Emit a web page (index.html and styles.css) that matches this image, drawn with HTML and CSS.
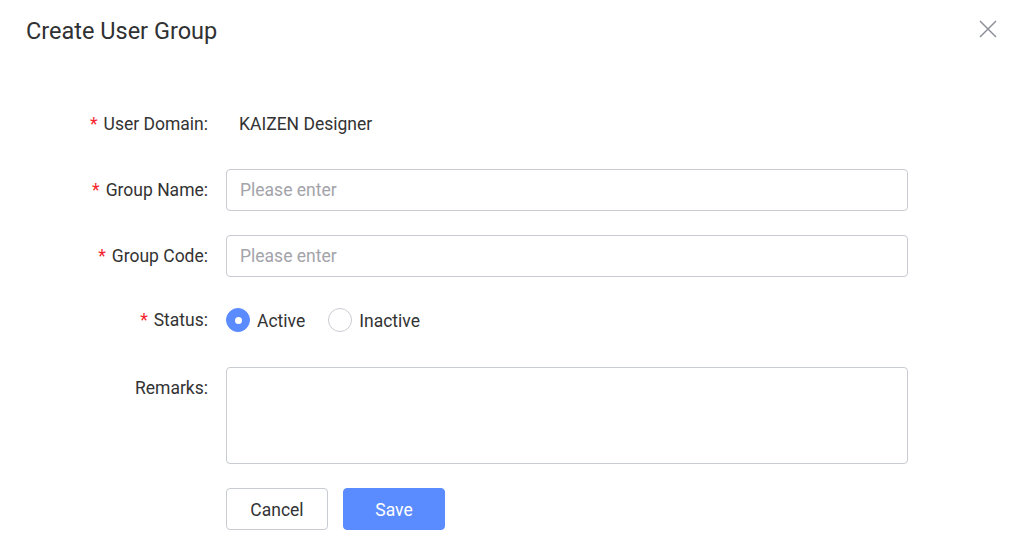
FILE: index.html
```html
<!DOCTYPE html>
<html lang="en">
<head>
<meta charset="utf-8">
<title>Create User Group</title>
<link rel="stylesheet" href="styles.css">
</head>
<body>
<div class="dialog">
  <div class="header">
    <h1 class="title">Create User Group</h1>
    <button class="close" aria-label="Close">
      <svg width="18" height="18" viewBox="0 0 18 18"><path d="M1 1L17 17M17 1L1 17" stroke="#8c9099" stroke-width="1.5" fill="none"/></svg>
    </button>
  </div>
  <form class="form">
    <div class="row row-text">
      <label class="label"><span class="req">*</span>User Domain:</label>
      <div class="value">KAIZEN Designer</div>
    </div>
    <div class="row">
      <label class="label"><span class="req">*</span>Group Name:</label>
      <input class="input" type="text" placeholder="Please enter">
    </div>
    <div class="row">
      <label class="label"><span class="req">*</span>Group Code:</label>
      <input class="input" type="text" placeholder="Please enter">
    </div>
    <div class="row row-status">
      <label class="label"><span class="req">*</span>Status:</label>
      <div class="radios">
        <span class="radio-item"><span class="radio checked"></span>Active</span>
        <span class="radio-item"><span class="radio"></span>Inactive</span>
      </div>
    </div>
    <div class="row row-remarks">
      <label class="label label-top">Remarks:</label>
      <textarea class="textarea"></textarea>
    </div>
    <div class="row row-actions">
      <span></span>
      <div class="actions">
        <button type="button" class="btn btn-default">Cancel</button>
        <button type="button" class="btn btn-primary">Save</button>
      </div>
    </div>
  </form>
</div>
</body>
</html>
```
FILE: styles.css
```css
* { box-sizing: border-box; }
html, body { margin: 0; padding: 0; background: #fff; }
body {
  font-family: Roboto, "Liberation Sans", Arial, sans-serif;
  color: #333;
  width: 1014px;
  height: 554px;
  overflow: hidden;
}
.dialog { width: 1014px; }
.header {
  display: flex;
  justify-content: space-between;
  align-items: flex-start;
  padding: 16px 17px 0 26px;
  height: 103px;
}
.title {
  margin: 0;
  font-size: 23.5px;
  font-weight: 400;
  line-height: 30px;
  color: #303133;
}
.close {
  margin-top: 4px;
  padding: 0;
  border: 0;
  background: none;
  width: 18px;
  height: 18px;
  display: flex;
}
.form { display: flex; flex-direction: column; }
.row {
  display: grid;
  grid-template-columns: 208px 682px;
  column-gap: 18px;
  align-items: center;
  margin-bottom: 24px;
  font-size: 17.5px;
}
.row-text { height: 42px; }
.row-status { height: 36px; margin-bottom: 30px; }
.row-remarks { align-items: start; }
.label {
  text-align: right;
  white-space: nowrap;
  line-height: 42px;
  color: #333;
}
.row-text .label { line-height: 41px; }
.row-status .label { line-height: 38px; }
.req {
  color: #f5222d;
  margin-right: 6px;
}
.value { padding-left: 13px; color: #333; line-height: 38px; }
.input {
  height: 42px;
  width: 682px;
  border: 1px solid #c9cbd3;
  border-radius: 4px;
  padding: 0 13px 1px;
  font: inherit;
  font-size: 17.5px;
  color: #333;
  outline: none;
}
.input::placeholder { color: #a3a3aa; }
.textarea {
  height: 97px;
  width: 682px;
  border: 1px solid #c9cbd3;
  border-radius: 4px;
  resize: none;
  font: inherit;
  outline: none;
  display: block;
}
.radios { display: flex; align-items: center; gap: 23px; }
.radio-item { display: inline-flex; align-items: center; gap: 7px; color: #333; padding-top: 2px; }
.radio {
  width: 24px;
  height: 24px;
  border-radius: 50%;
  border: 1px solid #c9cbd3;
  background: #fff;
  display: inline-block;
  position: relative;
  margin-top: -2px;
}
.radio.checked {
  border-color: #5b8cff;
  background: #5b8cff;
}
.radio.checked::after {
  content: "";
  position: absolute;
  left: 50%;
  top: 50%;
  width: 7px;
  height: 7px;
  margin: -3.5px 0 0 -3.5px;
  border-radius: 50%;
  background: #fff;
}
.actions { display: flex; gap: 15px; }
.btn {
  width: 102px;
  height: 42px;
  border-radius: 4px;
  font: inherit;
  font-size: 17.5px;
  padding: 2px 0 0;
  cursor: pointer;
}
.btn-default {
  background: #fff;
  border: 1px solid #c9cbd3;
  color: #333;
}
.btn-primary {
  background: #5b8cff;
  border: 1px solid #5b8cff;
  color: #fff;
}
```
